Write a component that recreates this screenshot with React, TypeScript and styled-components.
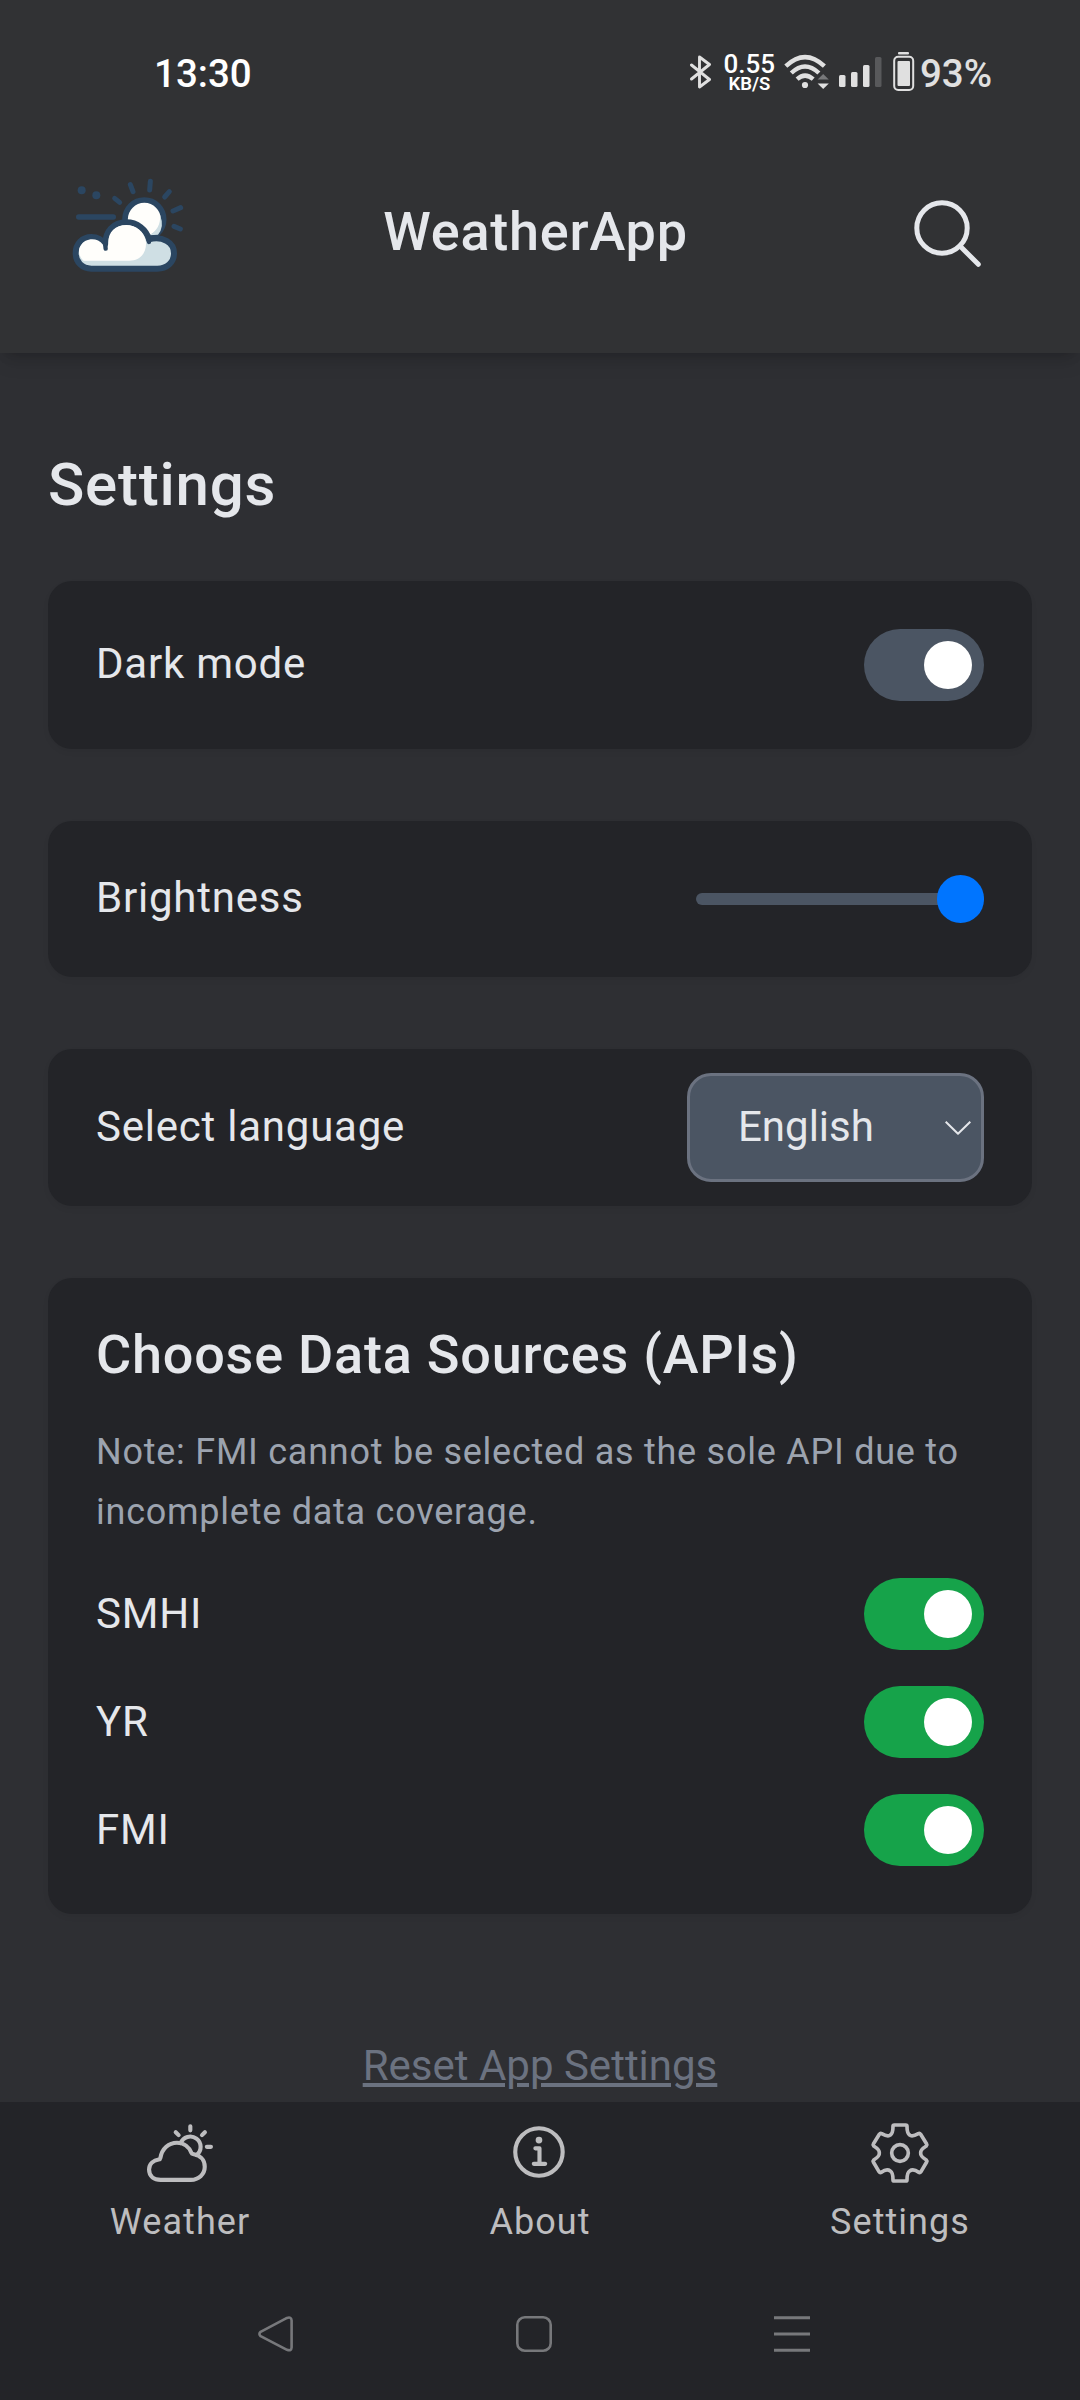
import React, { useState } from "react";
import styled, { createGlobalStyle } from "styled-components";
import { IoPartlySunnyOutline, IoInformationCircleOutline } from "react-icons/io5";

const GlobalStyle = createGlobalStyle`
  *, *::before, *::after { box-sizing: border-box; }
  body { margin: 0; background: #2e2f33; }
  button { border: 0; padding: 0; background: none; font: inherit; letter-spacing: inherit; color: inherit; }
  svg { display: block; }
`;

const Screen = styled.div`
  width: 1080px;
  height: 2400px;
  display: flex;
  flex-direction: column;
  overflow: hidden;
  background: #2e2f33;
  color: #e5e7eb;
  font-family: Roboto, "Noto Sans", sans-serif;
  letter-spacing: 0.77px;
`;

const Header = styled.header`
  height: 353px;
  flex: none;
  background: #313234;
  box-shadow: 0 12px 18px -3px rgba(0, 0, 0, 0.1), 0 6px 12px -6px rgba(0, 0, 0, 0.2);
`;

const StatusBar = styled.div`
  height: 144px;
  padding: 0 88px 0 154px;
  display: flex;
  justify-content: space-between;
  align-items: center;
  letter-spacing: 0;
`;

const Clock = styled.span`
  padding-top: 3px;
  font-size: 38.5px;
  font-weight: 500;
  line-height: 44px;
  color: #fff;
`;

const StatusIcons = styled.div`
  display: flex;
  align-items: center;
  color: #e0e0e0;
`;

const NetSpeed = styled.div`
  width: 53px;
  margin: 0 8px 0 11px;
  padding-top: 3px;
  display: flex;
  flex-direction: column;
  align-items: center;
  color: #fff;
  font-weight: 500;
`;

const Rate = styled.div`
  font-size: 26px;
  line-height: 22px;
`;

const Unit = styled.div`
  font-size: 18.5px;
  font-weight: 600;
  line-height: 19px;
`;

const SignalGap = styled.span`
  margin: 0 10px 0 9px;
`;

const Percent = styled.span`
  margin-left: 5px;
  padding-top: 3px;
  font-size: 38.5px;
  font-weight: 500;
  line-height: 44px;
`;

const TitleBar = styled.div`
  height: 176px;
  padding: 0 88px 0 68px;
  display: flex;
  align-items: center;
  justify-content: space-between;
`;

const LogoSlot = styled.div`
  padding-bottom: 16px;
`;

const AppTitle = styled.h1`
  margin: 0 29px 0 0;
  font-size: 54px;
  font-weight: 500;
  line-height: 84px;
`;

const Main = styled.main`
  flex: 1;
  min-height: 0;
  overflow: hidden;
  padding: 90px 48px 0;
  display: flex;
  flex-direction: column;
`;

const PageTitle = styled.h2`
  margin: 0 0 54px;
  font-size: 60px;
  font-weight: 500;
  line-height: 84px;
`;

const Card = styled.section<{ $height?: number }>`
  flex: none;
  height: ${(p) => (p.$height ? p.$height + "px" : "auto")};
  margin-bottom: 72px;
  padding: 0 48px;
  display: flex;
  align-items: center;
  justify-content: space-between;
  border-radius: 24px;
  background: #232428;
  box-shadow: 0 3px 6px rgba(0, 0, 0, 0.05);
`;

const SourcesCard = styled(Card)`
  padding: 35px 48px 48px;
  flex-direction: column;
  align-items: stretch;
  justify-content: flex-start;
`;

const Label = styled.span<{ $lift?: number }>`
  padding-bottom: ${(p) => p.$lift ?? 0}px;
  font-size: 42px;
  line-height: 60px;
`;

const Track = styled.button<{ $on: boolean; $color: string }>`
  width: 120px;
  height: 72px;
  padding: 0 12px;
  display: flex;
  align-items: center;
  justify-content: ${(p) => (p.$on ? "flex-end" : "flex-start")};
  border-radius: 36px;
  background: ${(p) => (p.$on ? p.$color : "#4b5563")};
`;

const Knob = styled.span`
  width: 48px;
  height: 48px;
  border-radius: 50%;
  background: #fff;
`;

const Range = styled.input`
  appearance: none;
  width: 288px;
  height: 12px;
  margin: 0;
  border-radius: 6px;
  background: #4b5563;
  &::-webkit-slider-thumb {
    appearance: none;
    width: 47.5px;
    height: 47.5px;
    border-radius: 50%;
    background: #0075ff;
  }
`;

const SelectBox = styled.button`
  width: 297px;
  height: 109px;
  padding: 0 10px 0 48px;
  display: flex;
  align-items: center;
  justify-content: space-between;
  border: 3px solid #6b7280;
  border-radius: 24px;
  background: #4b5563;
  letter-spacing: 0;
  color: #e5e7eb;
`;

const SourcesTitle = styled.h3`
  margin: 0;
  font-size: 54px;
  font-weight: 500;
  line-height: 84px;
`;

const Note = styled.p`
  margin: 25px 0 36px;
  font-size: 36px;
  line-height: 60px;
  letter-spacing: 0.75px;
  color: #9ca3af;
`;

const SourceList = styled.div`
  display: flex;
  flex-direction: column;
  gap: 36px;
`;

const SourceRow = styled.div`
  height: 72px;
  display: flex;
  align-items: center;
  justify-content: space-between;
`;

const ResetLink = styled.button`
  align-self: center;
  margin-top: 50px;
  font-size: 42px;
  line-height: 60px;
  letter-spacing: 0;
  color: #6b7280;
  text-decoration: underline;
  text-decoration-thickness: 4px;
  text-underline-offset: 3px;
`;

const BottomArea = styled.footer`
  height: 298px;
  flex: none;
  background: #232428;
`;

const Tabs = styled.nav`
  height: 166px;
  display: grid;
  grid-template-columns: repeat(3, 1fr);
  color: #bdbdbf;
`;

const Tab = styled.button`
  padding-top: 18px;
  display: flex;
  flex-direction: column;
  align-items: center;
  gap: 6px;
  font-size: 36px;
  line-height: 60px;
  letter-spacing: 1.05px;
`;

const TabIcon = styled.span`
  height: 66px;
  display: flex;
  align-items: center;
`;

const SystemNav = styled.div`
  height: 132px;
  padding: 0 270px 0 258px;
  display: flex;
  justify-content: space-between;
  align-items: center;
`;

const Logo = () => (
  <svg width="120" height="100" viewBox="54 42 360 300" fill="none" stroke="#2b4661" strokeLinecap="round" strokeLinejoin="round">
    <circle cx="283" cy="178" r="58" fill="#fffefb" strokeWidth="17" />
    <path d="M298 226 Q334 204 330 164 Q344 200 324 224Z" fill="#cfdfe4" stroke="none" />
    <path
      d="M124 326 C96 326 77 306 77 279 C77 252 97 231 124 231 C142 231 157 240 166 254 C165 215 190 187 229 187 C262 187 288 208 297 238 C337 228 372 246 372 280 C372 308 350 326 322 326 Z"
      fill="#cfdfe4"
      strokeWidth="18"
    />
    <path
      d="M101 302 C86 290 83 271 92 257 C106 233 142 231 159 254 L168 270 L175 252 C173 217 195 195 229 195 C258 195 284 217 288 246 C290 280 270 302 238 302 Z"
      fill="#fffefb"
      stroke="none"
    />
    <path d="M167 266 L165 248 M297 246 L294 234" strokeWidth="13" />
    <path d="M86 171 H190" strokeWidth="16" />
    <g strokeWidth="15">
      <path d="M194 115 L209 127" />
      <path d="M241 74 L249 95" />
      <path d="M301 64 L299 90" />
      <path d="M358 95 L344 111" />
      <path d="M392 143 L369 153" />
      <path d="M372 199 L391 207" />
    </g>
    <g fill="#2b4661" stroke="none">
      <circle cx="95" cy="91" r="12" />
      <circle cx="139" cy="106" r="12" />
    </g>
  </svg>
);

const SearchIcon = () => (
  <svg width="80" height="80" viewBox="0 0 80 80" fill="none" stroke="#e5e7eb" strokeWidth="5" strokeLinecap="round">
    <circle cx="30" cy="36" r="25.2" />
    <path d="M48 54 L66.3 72.3" />
  </svg>
);

const BluetoothIcon = () => (
  <svg width="22" height="36" viewBox="0 0 22 36" fill="none" stroke="#e0e0e0" strokeWidth="2.9" strokeLinecap="round" strokeLinejoin="round">
    <path d="M1.5 11 L19.5 25.5 L9.5 33 V3 L19.5 10.5 L1.5 25" />
  </svg>
);

const WifiIcon = () => (
  <svg width="46" height="36" viewBox="0 0 46 36" fill="none" stroke="#e0e0e0" strokeWidth="4.4">
    <path d="M1.8 12.2 Q21 -6 40.4 12.2" />
    <path d="M7.3 19 Q21 6 34.9 19" />
    <path d="M13.1 25.2 Q21 18 29.2 25.2" />
    <circle cx="21" cy="31" r="3.1" fill="#e0e0e0" stroke="none" />
    <path d="M33.6 25.5 L39.2 20 L44.8 25.5 Z" fill="#77787a" stroke="none" />
    <path d="M33.6 29.5 L39.2 35 L44.8 29.5 Z" fill="#e0e0e0" stroke="none" />
  </svg>
);

const SignalIcon = () => (
  <svg width="44" height="32" viewBox="0 0 44 32" fill="#e0e0e0">
    <rect x="0" y="19" width="6.5" height="12" rx="1.5" />
    <rect x="12" y="16" width="6.5" height="15" rx="1.5" />
    <rect x="24" y="9" width="6.5" height="22" rx="1.5" />
    <rect x="36" y="1" width="6.5" height="30" rx="1.5" fill="#58595b" />
  </svg>
);

const BatteryIcon = () => (
  <svg width="22" height="40" viewBox="0 0 22 40" fill="none">
    <rect x="5" y="0" width="11" height="2.6" rx="1" fill="#e0e0e0" />
    <rect x="1.2" y="4.7" width="19" height="33.3" rx="4" stroke="#e0e0e0" strokeWidth="2" />
    <rect x="4.5" y="9" width="12.5" height="25" rx="1" fill="#e0e0e0" />
  </svg>
);

const GearIcon = () => (
  <svg width="60" height="62" viewBox="930 336 180 186" fill="none" stroke="#bdbdbf" strokeWidth="11" strokeLinejoin="round">
    <path d="M1003 345 H1037 Q1041 345 1041 349 Q1041 371 1049 375 Q1056 382 1075 371 Q1079 369 1082 373 L1100 402 Q1102 405 1099 408 Q1081 419 1082 429 Q1081 439 1099 450 Q1102 453 1100 456 L1083 485 Q1080 489 1076 487 Q1060 475 1049 483 Q1041 488 1041 509 Q1041 513 1037 513 H1003 Q999 513 999 509 Q999 488 991 483 Q980 475 964 487 Q960 489 957 485 L940 456 Q938 453 941 450 Q959 439 958 429 Q959 419 941 408 Q938 405 940 402 L958 373 Q961 369 965 371 Q984 382 991 375 Q999 371 999 349 Q999 345 1003 345 Z" />
    <circle cx="1020" cy="429" r="25" />
  </svg>
);

const Chevron = () => (
  <svg width="26" height="14" viewBox="0 0 26 14" fill="none" stroke="#e5e7eb" strokeWidth="2" strokeLinejoin="round">
    <path d="M0.7 0.7 L13 12.7 L25.3 0.7" />
  </svg>
);

const BackIcon = () => (
  <svg width="36" height="36" viewBox="0 0 36 36" fill="none" stroke="#77787b" strokeWidth="2.6" strokeLinejoin="round">
    <path d="M29 1.9 L2.6 15.8 Q0.2 18 2.6 20.2 L29 33.8 Q33.4 35.4 33.6 31.5 V4.5 Q33.4 0.4 29 1.9 Z" />
  </svg>
);

const HomeIcon = () => (
  <svg width="36" height="36" viewBox="0 0 36 36" fill="none" stroke="#77787b" strokeWidth="2.6">
    <rect x="1.3" y="1.3" width="33.4" height="33.4" rx="7.5" />
  </svg>
);

const MenuIcon = () => (
  <svg width="36" height="36" viewBox="0 0 36 36" stroke="#77787b" strokeWidth="3">
    <path d="M0 1.7 H36 M0 18 H36 M0 34.3 H36" />
  </svg>
);

type ToggleProps = { initial?: boolean; color: string; label: string };

const Toggle = ({ initial = true, color, label }: ToggleProps) => {
  const [on, setOn] = useState(initial);
  return (
    <Track $on={on} $color={color} role="switch" aria-checked={on} aria-label={label} onClick={() => setOn(!on)}>
      <Knob />
    </Track>
  );
};

export default function App() {
  return (
    <>
      <GlobalStyle />
      <Screen>
        <Header>
          <StatusBar>
            <Clock>13:30</Clock>
            <StatusIcons>
              <BluetoothIcon />
              <NetSpeed>
                <Rate>0.55</Rate>
                <Unit>KB/S</Unit>
              </NetSpeed>
              <WifiIcon />
              <SignalGap>
                <SignalIcon />
              </SignalGap>
              <BatteryIcon />
              <Percent>93%</Percent>
            </StatusIcons>
          </StatusBar>
          <TitleBar>
            <LogoSlot>
              <Logo />
            </LogoSlot>
            <AppTitle>WeatherApp</AppTitle>
            <SearchIcon />
          </TitleBar>
        </Header>

        <Main>
          <PageTitle>Settings</PageTitle>
          <Card $height={168}>
            <Label $lift={3}>Dark mode</Label>
            <Toggle color="#4b5563" label="Dark mode" />
          </Card>
          <Card $height={156}>
            <Label $lift={3}>Brightness</Label>
            <Range type="range" min={0} max={100} defaultValue={100} />
          </Card>
          <Card $height={157}>
            <Label $lift={1}>Select language</Label>
            <SelectBox>
              <Label $lift={1}>English</Label>
              <Chevron />
            </SelectBox>
          </Card>
          <SourcesCard $height={636}>
            <SourcesTitle>Choose Data Sources (APIs)</SourcesTitle>
            <Note>Note: FMI cannot be selected as the sole API due to incomplete data coverage.</Note>
            <SourceList>
              {["SMHI", "YR", "FMI"].map((name) => (
                <SourceRow key={name}>
                  <Label>{name}</Label>
                  <Toggle color="#16a34a" label={name} />
                </SourceRow>
              ))}
            </SourceList>
          </SourcesCard>
          <ResetLink>Reset App Settings</ResetLink>
        </Main>

        <BottomArea>
          <Tabs>
            <Tab>
              <TabIcon>
                <IoPartlySunnyOutline size={66} />
              </TabIcon>
              Weather
            </Tab>
            <Tab>
              <TabIcon>
                <IoInformationCircleOutline size={66} />
              </TabIcon>
              About
            </Tab>
            <Tab>
              <TabIcon>
                <GearIcon />
              </TabIcon>
              Settings
            </Tab>
          </Tabs>
          <SystemNav>
            <BackIcon />
            <HomeIcon />
            <MenuIcon />
          </SystemNav>
        </BottomArea>
      </Screen>
    </>
  );
}
